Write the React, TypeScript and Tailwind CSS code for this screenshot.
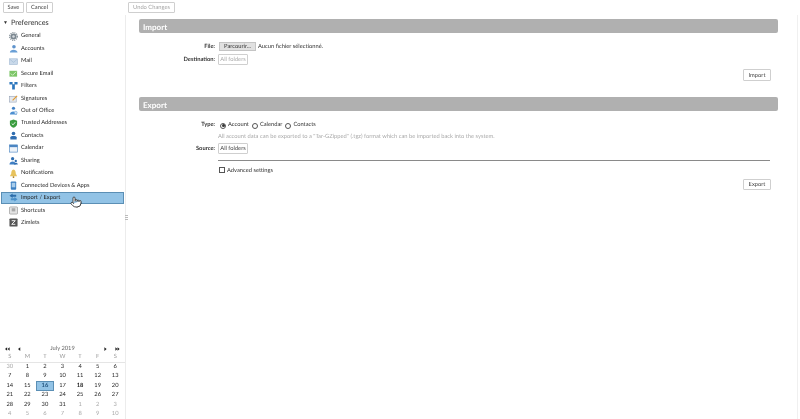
import React from 'react';
import { Pointer } from 'lucide-react';

type IconName =
  | 'general' | 'accounts' | 'mail' | 'secure' | 'filters' | 'signatures' | 'office' | 'trusted'
  | 'contacts' | 'calendar' | 'sharing' | 'notifications' | 'devices' | 'import' | 'shortcuts' | 'zimlets';

const prefItems: { label: string; icon: IconName }[] = [
  { label: 'General', icon: 'general' },
  { label: 'Accounts', icon: 'accounts' },
  { label: 'Mail', icon: 'mail' },
  { label: 'Secure Email', icon: 'secure' },
  { label: 'Filters', icon: 'filters' },
  { label: 'Signatures', icon: 'signatures' },
  { label: 'Out of Office', icon: 'office' },
  { label: 'Trusted Addresses', icon: 'trusted' },
  { label: 'Contacts', icon: 'contacts' },
  { label: 'Calendar', icon: 'calendar' },
  { label: 'Sharing', icon: 'sharing' },
  { label: 'Notifications', icon: 'notifications' },
  { label: 'Connected Devices & Apps', icon: 'devices' },
  { label: 'Import / Export', icon: 'import' },
  { label: 'Shortcuts', icon: 'shortcuts' },
  { label: 'Zimlets', icon: 'zimlets' },
];

const weeks: { d: number; muted?: boolean; bold?: boolean; selected?: boolean }[][] = [
  [{ d: 30, muted: true }, { d: 1 }, { d: 2 }, { d: 3 }, { d: 4 }, { d: 5 }, { d: 6 }],
  [{ d: 7 }, { d: 8 }, { d: 9 }, { d: 10 }, { d: 11 }, { d: 12 }, { d: 13 }],
  [{ d: 14 }, { d: 15 }, { d: 16, selected: true }, { d: 17 }, { d: 18, bold: true }, { d: 19 }, { d: 20 }],
  [{ d: 21 }, { d: 22 }, { d: 23 }, { d: 24 }, { d: 25 }, { d: 26 }, { d: 27 }],
  [{ d: 28 }, { d: 29 }, { d: 30 }, { d: 31 }, { d: 1, muted: true }, { d: 2, muted: true }, { d: 3, muted: true }],
  [{ d: 4, muted: true }, { d: 5, muted: true }, { d: 6, muted: true }, { d: 7, muted: true }, { d: 8, muted: true }, { d: 9, muted: true }, { d: 10, muted: true }],
];

const PrefIcon: React.FC<{ name: IconName }> = ({ name }) => {
  const shapes: Record<IconName, React.ReactNode> = {
    general: (<><circle cx="5" cy="5" r="3.4" fill="#7b8790" /><circle cx="5" cy="5" r="4.3" fill="none" stroke="#7b8790" strokeWidth="1.2" strokeDasharray="1.3 1" /><circle cx="5" cy="5" r="1.4" fill="#d5dade" /></>),
    accounts: (<><circle cx="5.5" cy="3" r="2" fill="#5f93cc" /><path d="M1 9.5 C1 5.5 9 5.5 9.5 9.5Z" fill="#6a9fd6" /></>),
    mail: (<><rect x="0.5" y="2" width="9" height="6.5" fill="#c9d9ea" stroke="#9db6d0" strokeWidth="0.6" /><path d="M1 2.5 L5 6 L9 2.5" fill="none" stroke="#9db6d0" strokeWidth="0.6" /></>),
    secure: (<><rect x="0.5" y="2" width="8.5" height="6.5" fill="#7cc567" /><path d="M2 5 L4 7 L8 3" fill="none" stroke="#d9f2cf" strokeWidth="1" /></>),
    filters: (<path d="M0.5 1 H4 V3.5 H6 V1 H9.5 V4 H6.5 V9.5 H3.5 V4 H0.5Z" fill="#2d77bd" />),
    signatures: (<><rect x="0.5" y="2.5" width="7.5" height="6.5" fill="#e4e8ee" stroke="#8e9bb0" strokeWidth="0.6" /><path d="M4 7 L9 2" stroke="#e59a2b" strokeWidth="1.2" /></>),
    office: (<><circle cx="5" cy="2.5" r="1.8" fill="#3f7fc4" /><path d="M1 9.5 C1 5 8 5 9 9.5Z" fill="#4d8fd1" /><circle cx="7.5" cy="7.5" r="1.6" fill="#dbe7f4" stroke="#4d8fd1" strokeWidth="0.5" /></>),
    trusted: (<><path d="M5 0.5 L9 2 V5.5 C9 7.5 7 9 5 9.8 C3 9 1 7.5 1 5.5 V2 Z" fill="#3a9c3f" /><path d="M3 5 L4.5 6.5 L7 3.5" fill="none" stroke="#ffffff" strokeWidth="0.9" /></>),
    contacts: (<><circle cx="5" cy="2.8" r="2" fill="#2f6db0" /><path d="M1.5 9.5 V7 C1.5 5 8.5 5 8.5 7 V9.5Z" fill="#2f6db0" /></>),
    calendar: (<><rect x="0.5" y="1" width="9" height="8" fill="#eef3f9" stroke="#4b85c2" strokeWidth="0.7" /><rect x="0.5" y="1" width="9" height="2.5" fill="#4b85c2" /></>),
    sharing: (<><circle cx="4" cy="3" r="1.8" fill="#2f6db0" /><path d="M0.5 9.5 C0.5 5 7.5 5 7.5 9.5Z" fill="#3f7fc4" /><circle cx="7.5" cy="5.5" r="1.3" fill="#2f6db0" /><path d="M5.5 9.5 C5.5 7 9.8 7 9.8 9.5Z" fill="#2f6db0" /></>),
    notifications: (<><path d="M5 0.5 C7 1 7.5 3 7.5 5 L9 8 H1 L2.5 5 C2.5 3 3 1 5 0.5Z" fill="#e7c25c" /><circle cx="5" cy="9" r="1" fill="#a87a1c" /></>),
    devices: (<><rect x="2" y="0.5" width="6" height="9.2" rx="1" fill="#3d80c2" /><rect x="3" y="2" width="4" height="5" fill="#a9cdeb" /></>),
    import: (<><path d="M0.5 3 L4 0.5 V2 H8 V4.2 H4 V5.5Z" fill="#2d6eab" /><path d="M9.5 7 L6 9.5 V8 H2 V5.8 H6 V4.5Z" fill="#4a90c9" /></>),
    shortcuts: (<><rect x="0.5" y="1" width="9" height="8" rx="1" fill="#e3e3e3" stroke="#8f8f8f" strokeWidth="0.7" /><rect x="3" y="2.5" width="4" height="3.5" fill="#a9a9a9" /></>),
    zimlets: (<><rect x="0.5" y="0.5" width="9" height="9" rx="1" fill="#555555" /><path d="M3 3 H7 L3 7 H7" fill="none" stroke="#ffffff" strokeWidth="1" /></>),
  };
  return (
    <svg width="9" height="9" viewBox="0 0 10 10" className="shrink-0">
      {shapes[name]}
    </svg>
  );
};

const Btn: React.FC<{ children: React.ReactNode; className?: string }> = ({ children, className }) => (
  <div className={`flex items-center justify-center rounded-[1px] border border-[#cfcfcf] bg-white pt-[2px] text-[#444] ${className ?? ''}`}>
    {children}
  </div>
);

const SectionHeader: React.FC<{ title: string }> = ({ title }) => (
  <div className="flex h-[14px] items-center rounded-[2px] bg-[#b0b0b0] pl-[4px] pt-[1px] text-[8px] font-bold text-white">{title}</div>
);

const Radio: React.FC<{ label: string; checked?: boolean }> = ({ label, checked }) => (
  <div className="flex items-center gap-[2px]">
    <div className="flex h-[6px] w-[6px] items-center justify-center rounded-full border border-[#555] bg-white">
      {checked && <div className="h-[3px] w-[3px] rounded-full bg-[#333]" />}
    </div>
    <span>{label}</span>
  </div>
);

const Arrow: React.FC<{ dir: 'left' | 'right'; double?: boolean }> = ({ dir, double }) => (
  <svg width={double ? 5 : 3} height="4" viewBox={double ? '0 0 7 5' : '0 0 4 5'}>
    {dir === 'left' ? (
      <>
        <path d="M3 0 V5 L0 2.5Z" fill="#222" />
        {double && <path d="M6.5 0 V5 L3.5 2.5Z" fill="#222" />}
      </>
    ) : (
      <>
        <path d="M0.5 0 V5 L3.5 2.5Z" fill="#222" />
        {double && <path d="M3.5 0 V5 L6.5 2.5Z" fill="#222" />}
      </>
    )}
  </svg>
);

export default function App() {
  return (
    <div className="relative flex h-[419px] w-[800px] flex-col overflow-hidden bg-white font-['Lato',sans-serif] text-[5.75px] text-[#2a2a2a] blur-[0.25px] [text-rendering:geometricPrecision]">
      {/* Toolbar */}
      <div className="flex h-[15px] shrink-0 items-start pt-[2px]">
        <div className="flex w-[128px] shrink-0 gap-[2px] pl-[3px]">
          <Btn className="h-[11px] w-[21px]">Save</Btn>
          <Btn className="h-[11px] w-[27px]">Cancel</Btn>
        </div>
        <Btn className="h-[11px] w-[47px] text-[#a5a5a5]">Undo Changes</Btn>
      </div>

      <div className="flex min-h-0 flex-1">
        {/* Sidebar */}
        <div className="flex w-[126px] shrink-0 flex-col border-r border-[#ececec]">
          <div className="flex h-[15px] items-center pl-[3px] pt-[2px] text-[7.3px] text-[#333]">
            <span className="mr-[3px] text-[5px]">▼</span>
            Preferences
          </div>
          <div className="flex flex-col px-[1px]">
            {prefItems.map((item) => {
              const active = item.label === 'Import / Export';
              return (
                <div
                  key={item.label}
                  className={`flex h-[12.45px] items-center gap-[3px] ${active ? 'border border-[#5b8fb5] bg-[#92c3e6] pl-[7px] text-[#222]' : 'pl-[8px]'}`}
                >
                  <PrefIcon name={item.icon} />
                  <span className="pt-[1px]">{item.label}</span>
                </div>
              );
            })}
          </div>

          {/* Mini calendar */}
          <div className="mt-auto flex flex-col">
            <div className="flex h-[8px] items-center px-[5px]">
              <div className="flex items-center gap-[8px]">
                <Arrow dir="left" double />
                <Arrow dir="left" />
              </div>
              <span className="flex-1 pt-[1px] text-center text-[#666]">July 2019</span>
              <div className="flex items-center gap-[8px]">
                <Arrow dir="right" />
                <Arrow dir="right" double />
              </div>
            </div>
            <div className="grid h-[10px] grid-cols-7 items-center border-b border-[#e5e5e5] px-[1px] text-center text-[#999]">
              {['S', 'M', 'T', 'W', 'T', 'F', 'S'].map((d, i) => (
                <span key={i}>{d}</span>
              ))}
            </div>
            <div className="grid grid-cols-7 px-[1px] text-center">
              {weeks.flat().map((c, i) => (
                <div
                  key={i}
                  className={`flex h-[9.4px] items-center justify-center ${c.muted ? 'text-[#aaa]' : ''} ${c.bold ? 'font-bold text-[#222]' : ''} ${c.selected ? 'border border-[#5b8fb5] bg-[#92c3e6] font-bold text-[#24557f]' : ''}`}
                >
                  {c.d}
                </div>
              ))}
            </div>
          </div>
        </div>

        {/* Main panel */}
        <div className="flex min-w-0 flex-1 flex-col pl-[13px] pr-[19px] pt-[4px]">
          <SectionHeader title="Import" />
          <div className="flex h-[64px] flex-col">
            <div className="mt-[8px] flex h-[11px] items-center">
              <span className="w-[76px] pt-[2px] text-right font-bold text-[#333]">File:</span>
              <div className="ml-[4px] flex h-[9px] w-[37px] items-center justify-center border border-[#c4c4c4] bg-[#e1e1e1] pt-[2px] text-[#333]">Parcourir...</div>
              <span className="ml-[2px] pt-[2px] text-[#333]">Aucun fichier sélectionné.</span>
            </div>
            <div className="mt-[2px] flex h-[11px] items-center">
              <span className="w-[76px] pt-[2px] text-right font-bold text-[#333]">Destination:</span>
              <Btn className="ml-[3px] h-[11px] w-[30px] text-[#aaa]">All folders</Btn>
            </div>
            <div className="mt-[4px] flex justify-end pr-[7px]">
              <Btn className="h-[12px] w-[28px]">Import</Btn>
            </div>
          </div>

          <SectionHeader title="Export" />
          <div className="flex flex-col">
            <div className="mt-[8px] flex h-[11px] items-center pt-[2px]">
              <span className="w-[76px] text-right font-bold text-[#333]">Type:</span>
              <div className="ml-[5px] flex gap-[3px] text-[#333]">
                <Radio label="Account" checked />
                <Radio label="Calendar" />
                <Radio label="Contacts" />
              </div>
            </div>
            <div className="ml-[79px] mt-[1px] flex h-[9px] items-center pt-[3px] text-[#aaa]">
              All account data can be exported to a "Tar-GZipped" (.tgz) format which can be imported back into the system.
            </div>
            <div className="mt-[3px] flex h-[11px] items-center">
              <span className="w-[76px] pt-[1px] text-right font-bold text-[#333]">Source:</span>
              <Btn className="ml-[3px] h-[11px] w-[30px] text-[#333]">All folders</Btn>
            </div>
            <div className="ml-[79px] mr-[8px] mt-[6px] border-t border-[#8a8a8a]" />
            <div className="ml-[80px] mt-[4px] flex items-center gap-[2px] text-[#333]">
              <div className="h-[6px] w-[6px] border border-[#555]" />
              <span className="pt-[2px]">Advanced settings</span>
            </div>
            <div className="mt-[3px] flex justify-end pr-[7px]">
              <Btn className="h-[11px] w-[28px]">Export</Btn>
            </div>
          </div>
        </div>
        <div className="w-[1px] shrink-0 bg-[#f0f0f0]" />
        <div className="w-[2px] shrink-0" />
      </div>

      {/* Sash handle */}
      <div className="absolute left-[125px] top-[215px] flex flex-col gap-[1px]">
        {[0, 1, 2].map((i) => (
          <div key={i} className="h-[1px] w-[3px] bg-[#bbb]" />
        ))}
      </div>

      {/* Mouse cursor */}
      <Pointer className="absolute left-[70px] top-[196px] h-[12px] w-[12px] fill-white text-[#222]" strokeWidth={1.6} />
    </div>
  );
}
